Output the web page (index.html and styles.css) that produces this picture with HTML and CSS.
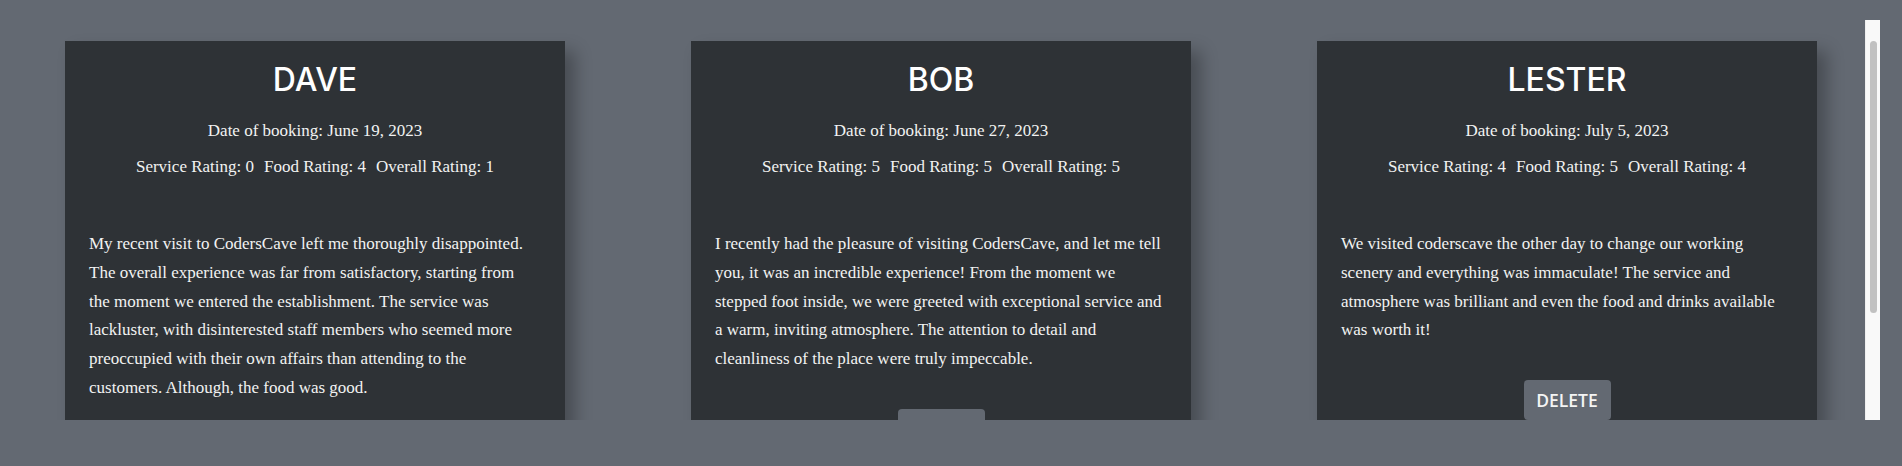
FILE: index.html
```html
<!DOCTYPE html>
<html lang="en">
<head>
<meta charset="utf-8">
<title>Reviews</title>
<link rel="stylesheet" href="styles.css">
</head>
<body>
<div class="viewport">
  <main class="board">
    <article class="card">
      <h2 class="card-name">DAVE</h2>
      <p class="card-date">Date of booking: June 19, 2023</p>
      <p class="card-ratings"><span>Service Rating: 0</span><span>Food Rating: 4</span><span>Overall Rating: 1</span></p>
      <p class="card-text">My recent visit to CodersCave left me thoroughly disappointed. The overall experience was far from satisfactory, starting from the moment we entered the establishment. The service was lackluster, with disinterested staff members who seemed more preoccupied with their own affairs than attending to the customers. Although, the food was good.</p>
      <button class="card-delete" type="button">DELETE</button>
    </article>
    <article class="card">
      <h2 class="card-name">BOB</h2>
      <p class="card-date">Date of booking: June 27, 2023</p>
      <p class="card-ratings"><span>Service Rating: 5</span><span>Food Rating: 5</span><span>Overall Rating: 5</span></p>
      <p class="card-text">I recently had the pleasure of visiting CodersCave, and let me tell you, it was an incredible experience! From the moment we stepped foot inside, we were greeted with exceptional service and a warm, inviting atmosphere. The attention to detail and cleanliness of the place were truly impeccable.</p>
      <button class="card-delete" type="button">DELETE</button>
    </article>
    <article class="card">
      <h2 class="card-name">LESTER</h2>
      <p class="card-date">Date of booking: July 5, 2023</p>
      <p class="card-ratings"><span>Service Rating: 4</span><span>Food Rating: 5</span><span>Overall Rating: 4</span></p>
      <p class="card-text">We visited coderscave the other day to change our working scenery and everything was immaculate! The service and atmosphere was brilliant and even the food and drinks available was worth it!</p>
      <button class="card-delete" type="button">DELETE</button>
    </article>
  </main>
  <div class="scrollbar" aria-hidden="true"><div class="scrollbar-thumb"></div></div>
</div>
</body>
</html>
```
FILE: styles.css
```css
html, body {
  margin: 0;
  padding: 0;
  background: #636972;
  overflow: hidden;
}

.viewport {
  display: flex;
  height: 400px;
  margin: 20px 22px 0 0;
}

.board {
  flex: 1 1 auto;
  min-width: 0;
  overflow: hidden;
  display: flex;
  align-items: flex-start;
  gap: 126px;
  padding: 21px 0 0 65px;
}

.scrollbar {
  flex: 0 0 15px;
  box-sizing: border-box;
  padding: 21px 3px 0 4px;
  background: #f9f9f9;
  border-left: 1px solid #efefef;
}

.scrollbar-thumb {
  height: 272px;
  border-radius: 4px;
  background: #c1c1c1;
}

.card {
  flex: 0 0 500px;
  width: 500px;
  box-sizing: border-box;
  padding: 19px 24px 20px;
  background: #2e3236;
  box-shadow: 10px 10px 16px rgba(0, 0, 0, 0.28);
  display: flex;
  flex-direction: column;
  align-items: center;
  color: #f2f2f2;
}

.card-name {
  margin: 0;
  font-family: "Inter", "Open Sans", sans-serif;
  font-weight: 500;
  font-size: 32px;
  line-height: 40px;
  letter-spacing: 0;
  color: #ffffff;
}

.card-date,
.card-ratings,
.card-text {
  font-family: "Liberation Serif", serif;
  font-size: 17px;
}

.card-date {
  margin: 19px 0 0;
  line-height: 24px;
}

.card-ratings {
  margin: 12px 0 0;
  line-height: 24px;
  display: flex;
  gap: 10px;
}

.card-text {
  align-self: stretch;
  margin: 51px 0 0;
  padding-right: 4.5px;
  line-height: 28.8px;
}

.card-delete {
  margin-top: 35px;
  width: 87px;
  padding: 0;
  height: 40px;
  border: none;
  border-radius: 4px;
  background: #636972;
  color: #f4f4f4;
  font-family: "Open Sans", sans-serif;
  font-weight: 600;
  font-size: 17.5px;
  line-height: 40px;
}
```
